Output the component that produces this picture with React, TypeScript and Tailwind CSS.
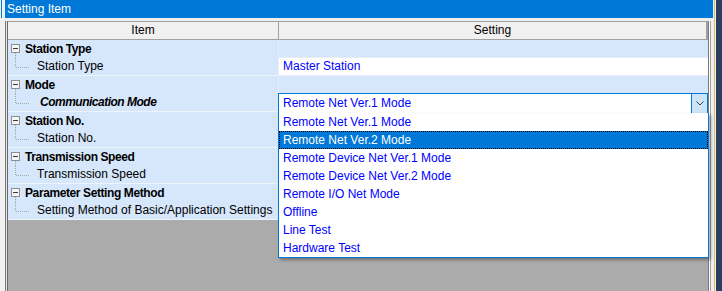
import React from "react";

type Group = {
  title: string;
  child: string;
  italic?: boolean;
  combo?: boolean;
  value?: string;
};

const groups: Group[] = [
  { title: "Station Type", child: "Station Type", value: "Master Station" },
  { title: "Mode", child: "Communication Mode", italic: true, combo: true },
  { title: "Station No.", child: "Station No.", value: "" },
  { title: "Transmission Speed", child: "Transmission Speed", value: "" },
  {
    title: "Parameter Setting Method",
    child: "Setting Method of Basic/Application Settings",
    value: "",
  },
];

const options = [
  "Remote Net Ver.1 Mode",
  "Remote Net Ver.2 Mode",
  "Remote Device Net Ver.1 Mode",
  "Remote Device Net Ver.2 Mode",
  "Remote I/O Net Mode",
  "Offline",
  "Line Test",
  "Hardware Test",
];

function GroupGutter() {
  return (
    <svg width="17" height="18" viewBox="0 0 17 18" className="shrink-0">
      <line x1="7.5" y1="13" x2="7.5" y2="18" stroke="#a8a8a8" strokeDasharray="1 1" />
      <rect x="3.5" y="4.5" width="8" height="8" fill="#f3f5f8" stroke="#8e8f8f" />
      <line x1="5" y1="8.5" x2="10" y2="8.5" stroke="#3a3a3a" />
    </svg>
  );
}

function ChildGutter() {
  return (
    <svg width="29" height="18" viewBox="0 0 29 18" className="shrink-0">
      <line x1="7.5" y1="0" x2="7.5" y2="9" stroke="#a8a8a8" strokeDasharray="1 1" />
      <line x1="8" y1="9.5" x2="21" y2="9.5" stroke="#a8a8a8" strokeDasharray="1 1" />
    </svg>
  );
}

function Combo() {
  return (
    <div className="relative z-10 -mt-px flex h-[21px] w-full shrink-0 border border-[#0078d7] bg-white">
      <div className="flex-1 pl-[4px] leading-[19px] text-[#0000ff]">Remote Net Ver.1 Mode</div>
      <div className="flex w-[16px] items-center justify-center border-l border-[#0078d7] bg-[#cce4f7]">
        <svg width="8" height="5" viewBox="0 0 8 5">
          <path d="M0.5 0.5 L4 4 L7.5 0.5" fill="none" stroke="#404040" strokeWidth="1" />
        </svg>
      </div>
      <div className="absolute left-[-1px] top-[19px] w-[431px] border-x border-b border-[#0078d7] bg-white shadow-[2px_2px_3px_rgba(0,0,0,0.35)]">
        {options.map((o, i) =>
          i === 1 ? (
            <div
              key={o}
              className="h-[18px] border border-dotted border-black bg-[#0078d7] pl-[3px] leading-[16px] text-white"
            >
              {o}
            </div>
          ) : (
            <div key={o} className="h-[18px] pl-[4px] leading-[18px] text-[#0000ff]">
              {o}
            </div>
          )
        )}
      </div>
    </div>
  );
}

export default function App() {
  return (
    <div className="relative flex h-[291px] w-[722px] overflow-hidden bg-[#f0f0f0] font-['Liberation_Sans',Arial,sans-serif] text-[12px] text-black">
      {/* left strip */}
      <div className="w-[5px] shrink-0">
        <div className="ml-px h-[18px] w-px bg-[#0078d7]" />
      </div>

      {/* main panel */}
      <div className="flex w-[708px] shrink-0 flex-col">
        <div className="h-[18px] bg-[#0078d7] pl-[2px] leading-[18px] text-white">Setting Item</div>
        <div className="h-[3px]" />
        <div className="flex min-h-0 flex-1">
          <div className="w-px bg-[#7a7a7a]" />
          <div className="w-px bg-[#e3e3e3]" />
          <div className="w-px bg-[#6a6a6a]" />
          <div className="flex w-[700px] flex-col bg-[#ababab]">
            {/* header */}
            <div className="flex h-[19px] shrink-0 border-y border-[#a0a0a0] bg-[#f0f0f0] leading-[17px]">
              <div className="w-[271px] border-r border-[#a0a0a0] text-center">Item</div>
              <div className="flex-1 border-r-2 border-[#a0a0a0] text-center">Setting</div>
            </div>
            {/* rows */}
            {groups.map((g) => (
              <React.Fragment key={g.title}>
                <div className="flex h-[18px] shrink-0">
                  <div className="flex w-[270px] items-center bg-[#d6e6fb]">
                    <GroupGutter />
                    <span className="font-bold tracking-[-0.4px] leading-[18px]">{g.title}</span>
                  </div>
                  <div className="flex-1 border-b border-l border-[#e6eef9] bg-[#d6e6fb]" />
                </div>
                <div className="flex h-[18px] shrink-0">
                  <div className="flex w-[270px] items-center border-b border-[#eef4fd] bg-[#d6e6fb]">
                    <ChildGutter />
                    {g.italic ? (
                      <span className="ml-[3px] font-bold italic tracking-[-0.5px] leading-[17px]">{g.child}</span>
                    ) : (
                      <span className="leading-[17px]">{g.child}</span>
                    )}
                  </div>
                  <div className="flex flex-1">
                    {g.combo ? (
                      <Combo />
                    ) : (
                      <div className="flex-1 border-b border-l border-[#e6eef9] bg-white pl-[4px] leading-[17px] text-[#0000ff]">
                        {g.value}
                      </div>
                    )}
                  </div>
                </div>
              </React.Fragment>
            ))}
            <div className="flex-1" />
          </div>
          <div className="w-px bg-[#7a7a7a]" />
          <div className="w-px bg-white" />
          <div className="w-px bg-[#a0a0a0]" />
          <div className="w-[2px]" />
        </div>
      </div>

      {/* right strip */}
      <div className="w-px shrink-0" />
      <div className="w-px shrink-0 bg-[#d9bf62]" />
      <div className="w-px shrink-0" />
      <div className="w-[6px] shrink-0 bg-[#2c3e60]" />

      {/* mouse cursor */}
      <svg
        className="pointer-events-none absolute left-[592px] top-[137px]"
        width="13"
        height="20"
        viewBox="0 0 13 20"
      >
        <path
          d="M0.5 0.5 L0.5 16.5 L4.5 12.8 L7 18.5 L9.3 17.5 L6.9 11.8 L12 11.8 Z"
          fill="white"
          stroke="black"
          strokeWidth="1"
          strokeLinejoin="miter"
        />
      </svg>
    </div>
  );
}
